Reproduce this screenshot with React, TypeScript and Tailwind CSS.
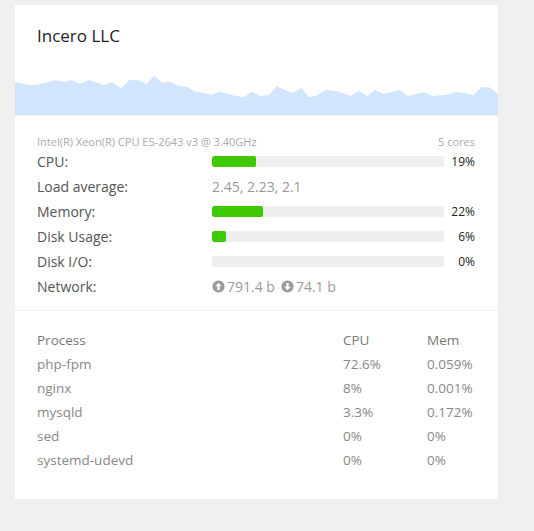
import React from "react";

const chartPoints: [number, number][] = [
  [15, 82], [30.7, 85], [37.5, 84.7], [55.5, 80], [64, 82], [71.5, 80], [80.4, 84],
  [88.6, 80], [103.9, 85], [112.4, 82], [120.9, 88.3], [129.4, 80], [137.9, 80],
  [146.5, 84], [154, 75.7], [162.1, 82.7], [170.3, 82], [178.8, 86.3], [186.7, 86.7],
  [194.8, 91.7], [203.7, 92.7], [211.2, 95], [219.7, 91.7], [235, 95.7], [243.5, 97.3],
  [252, 91.7], [260.6, 96], [269.1, 95], [276.6, 85.7], [284.4, 90], [292.9, 92.7],
  [301.4, 88], [309.3, 97.3], [317.4, 95.3], [326.3, 89.7], [334.5, 90.7], [342.3, 93],
  [350.8, 96], [358.7, 90.7], [367.2, 96], [375.3, 90], [383.5, 94], [399.2, 89.7],
  [408, 96], [424, 92], [432.6, 96], [449.6, 94.3], [457.1, 92], [465.6, 93],
  [473.4, 95.3], [481.3, 87.3], [489.4, 87.3], [498, 94],
];

const Sparkline = () => {
  const pts = chartPoints.map(([x, y]) => `${x - 15},${y - 70}`).join(" ");
  return (
    <svg width="483" height="45" viewBox="0 0 483 45" className="block">
      <polygon points={`0,45 ${pts} 483,45`} fill="#d1e6fe" />
    </svg>
  );
};

const Bar = ({ value }: { value: number }) => (
  <div className="flex-1 h-[11px] rounded-[2px] bg-[#efefef] overflow-hidden">
    <div className="h-full rounded-[2px] bg-[#3fc900]" style={{ width: `${value}%` }} />
  </div>
);

const CircleArrow = ({ down }: { down?: boolean }) => (
  <svg width="13" height="13" viewBox="0 0 12 12" className="inline-block">
    <circle cx="6" cy="6" r="5.6" fill="#9a9a9a" />
    <g transform={down ? "rotate(180 6 6)" : undefined}>
      <path d="M6 2.5 L9.1 5.8 H7.1 V9.3 H4.9 V5.8 H2.9 Z" fill="#fff" />
    </g>
  </svg>
);

const Row = ({ label, children }: { label: string; children: React.ReactNode }) => (
  <div className="flex items-center h-[25px]">
    <div className="w-[175px] text-[14px] font-medium text-[#555]">{label}</div>
    {children}
  </div>
);

const Pct = ({ v }: { v: string }) => (
  <div className="w-[31px] text-right text-[12px] text-[#222]">{v}</div>
);

const processes = [
  ["php-fpm", "72.6%", "0.059%"],
  ["nginx", "8%", "0.001%"],
  ["mysqld", "3.3%", "0.172%"],
  ["sed", "0%", "0%"],
  ["systemd-udevd", "0%", "0%"],
];

export default function App() {
  return (
    <div className="min-h-[531px] bg-[#f0f0f0] pt-[5px] pl-[15px] font-['Open_Sans',sans-serif]">
      <div className="w-[483px] bg-white">
        <div className="pt-[20px] pl-[22px] h-[65px] text-[17px] text-[#222] leading-[22px]">
          Incero LLC
        </div>
        <div className="border-b border-[#eeeeee]">
          <Sparkline />
        </div>

        <div className="pt-[19px] pb-[11px] pl-[22px] pr-[23px] border-b border-[#eeeeee]">
          <div className="flex justify-between h-[14px] items-center text-[11px] text-[#aaa]">
            <span>Intel(R) Xeon(R) CPU E5-2643 v3 @ 3.40GHz</span>
            <span>5 cores</span>
          </div>
          <Row label="CPU:">
            <Bar value={19} />
            <Pct v="19%" />
          </Row>
          <Row label="Load average:">
            <span className="text-[14px] text-[#999]">2.45, 2.23, 2.1</span>
          </Row>
          <Row label="Memory:">
            <Bar value={22} />
            <Pct v="22%" />
          </Row>
          <Row label="Disk Usage:">
            <Bar value={6} />
            <Pct v="6%" />
          </Row>
          <Row label="Disk I/O:">
            <Bar value={0} />
            <Pct v="0%" />
          </Row>
          <Row label="Network:">
            <span className="flex items-center gap-[2px] text-[14px] text-[#999]">
              <CircleArrow />
              <span>791.4 b</span>
              <span className="ml-[2px]" />
              <CircleArrow down />
              <span>74.1 b</span>
            </span>
          </Row>
        </div>

        <div className="pt-[17px] pb-[27px] pl-[22px] text-[13.5px] text-[#888]">
          <div className="flex items-center h-[24px] text-[#777]">
            <div className="w-[306px]">Process</div>
            <div className="w-[84px]">CPU</div>
            <div>Mem</div>
          </div>
          {processes.map(([name, cpu, mem]) => (
            <div key={name} className="flex items-center h-[24px]">
              <div className="w-[306px]">{name}</div>
              <div className="w-[84px]">{cpu}</div>
              <div>{mem}</div>
            </div>
          ))}
        </div>
      </div>
    </div>
  );
}
